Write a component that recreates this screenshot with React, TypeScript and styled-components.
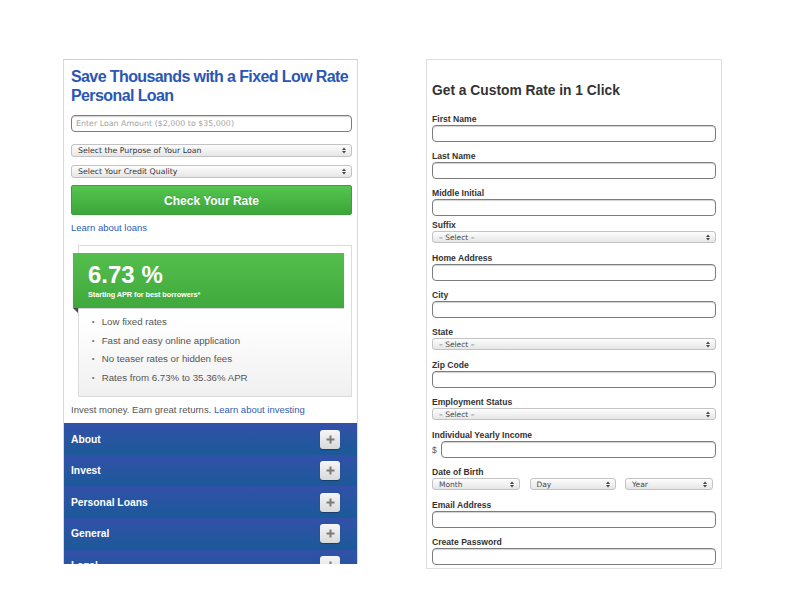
import React from 'react'
import styled, { createGlobalStyle } from 'styled-components'

const GlobalStyle = createGlobalStyle`
  body {
    margin: 0;
    background: #ffffff;
    font-family: "Liberation Sans", Arial, sans-serif;
  }
`

const Page = styled.div`
  display: flex;
  align-items: flex-start;
  gap: 68px;
  padding: 59px 0 0 63px;
`

/* ---------- left: loan teaser ---------- */

const LoanPanel = styled.section`
  width: 295px;
  height: 505px;
  box-sizing: border-box;
  border: 1px solid #d6d9e0;
  border-top-color: #c9d1e6;
  border-bottom: none;
  overflow: hidden;
`

const LoanBody = styled.div`
  padding: 7px 5px 0 7px;
`

const Headline = styled.h1`
  margin: 0;
  font-size: 16px;
  line-height: 19px;
  letter-spacing: -0.6px;
  font-weight: bold;
  color: #2b56b4;
`

const TextInput = styled.input<{ $mt?: number }>`
  display: block;
  width: 100%;
  height: 17px;
  margin: ${p => p.$mt ?? 0}px 0 0;
  padding: 0 4px;
  box-sizing: border-box;
  border: 1px solid #7d7d7d;
  border-radius: 4px;
  box-shadow: inset 0 1px 1px rgba(0, 0, 0, 0.18);
  background: #fff;
  font-family: "DejaVu Sans", sans-serif;
  font-size: 7.9px;
  color: #333;
  outline: none;

  &::placeholder {
    color: #a3a3a3;
  }
`

const SelectBox = styled.div<{ $mt?: number; $h?: number }>`
  display: flex;
  align-items: center;
  justify-content: space-between;
  height: ${p => p.$h ?? 13}px;
  margin-top: ${p => p.$mt ?? 0}px;
  padding: 0 5px 0 6px;
  box-sizing: border-box;
  border: 1px solid #c3c3c3;
  border-radius: 3px;
  background: linear-gradient(#fdfdfd, #e6e6e6);
  font-family: "DejaVu Sans", sans-serif;
  font-size: 7.8px;
  color: #333;
  white-space: nowrap;
`

const SelectText = styled.span<{ $muted?: boolean }>`
  color: ${p => (p.$muted ? '#4a4a4a' : '#333')};
  font-size: ${p => (p.$muted ? '7.5px' : '7.8px')};
`

const CheckButton = styled.button`
  display: block;
  width: 100%;
  height: 30px;
  margin-top: 7px;
  padding-top: 2px;
  border: 1px solid #3d9f3a;
  border-radius: 2px;
  background: linear-gradient(#55c44f, #3ba63a);
  color: #fff;
  font-family: "Liberation Sans", Arial, sans-serif;
  font-weight: bold;
  font-size: 12px;
  text-shadow: 0 -1px 0 rgba(0, 0, 0, 0.15);
`

const TextLink = styled.a`
  color: #2f5db3;
  text-decoration: none;
`

const LearnLine = styled.div`
  margin-top: 7.4px;
  font-size: 9.5px;
  line-height: 12px;
`

const RateCard = styled.div`
  margin: 10.5px 0 0 7px;
  padding: 7px 0 8px;
  border: 1px solid #dcdcdc;
  background: linear-gradient(#ffffff 50%, #f0f0f0);
`

const Ribbon = styled.div`
  position: relative;
  height: 55px;
  box-sizing: border-box;
  margin: 0 7px 0 -6px;
  padding: 9.4px 0 0 15px;
  background: linear-gradient(#54be4c, #40a93d);
  box-shadow: 0 1px 1px rgba(0, 0, 0, 0.15);
  color: #fff;

  &::after {
    content: '';
    position: absolute;
    left: 0;
    bottom: -5px;
    border-top: 5px solid #4a4a4a;
    border-left: 5px solid transparent;
  }
`

const BigRate = styled.div`
  font-size: 24px;
  line-height: 26px;
  font-weight: bold;
`

const RateNote = styled.div`
  margin-top: 2px;
  font-size: 7.4px;
  line-height: 10px;
  font-weight: bold;
  letter-spacing: -0.1px;
`

const Perks = styled.ul`
  list-style: none;
  margin: 0;
  padding: 5px 0 0 12.7px;
`

const Perk = styled.li`
  display: flex;
  font-size: 9.7px;
  line-height: 18.7px;
  color: #555;

  &::before {
    content: '•';
    width: 10px;
    font-size: 8px;
    color: #777;
  }
`

const InvestLine = styled.div`
  margin-top: 6.5px;
  font-size: 9.5px;
  line-height: 14px;
  color: #555;
`

const Nav = styled.nav`
  margin-top: 6px;
`

const NavRow = styled.div`
  display: flex;
  align-items: center;
  justify-content: space-between;
  height: 31.6px;
  padding: 0 17px 0 7px;
  background: linear-gradient(#3350a9, #1b5a98);
  color: #fff;
  font-size: 10.3px;
  font-weight: bold;
`

const PlusButton = styled.span`
  display: flex;
  align-items: center;
  justify-content: center;
  width: 20px;
  height: 19px;
  border-radius: 3px;
  background: linear-gradient(#f6f6f6, #d9d9d9);
  box-shadow: 0 1px 1px rgba(0, 0, 0, 0.3);
`

/* ---------- right: rate form ---------- */

const RatePanel = styled.section`
  width: 296px;
  box-sizing: border-box;
  padding: 23px 5px 3px;
  border: 1px solid #dedede;
`

const FormTitle = styled.h2`
  margin: 0 0 14px;
  font-size: 13.8px;
  line-height: 16px;
  font-weight: bold;
  color: #333;
`

const Field = styled.div<{ $gap: number }>`
  margin-bottom: ${p => p.$gap}px;
`

const Label = styled.label`
  display: block;
  font-size: 8.6px;
  line-height: 12px;
  font-weight: bold;
  color: #333;
`

const MoneyRow = styled.div`
  display: flex;
  align-items: center;
  gap: 3px;
`

const Dollar = styled.span`
  width: 6px;
  font-size: 8.5px;
  color: #555;
`

const DateRow = styled.div`
  display: grid;
  grid-template-columns: 88px 86px 88px;
  column-gap: 9.5px;
`

function Arrows() {
  return (
    <svg width="4" height="7" viewBox="0 0 4 7">
      <polygon points="0,3 2,0.5 4,3" fill="#444" />
      <polygon points="0,4 2,6.5 4,4" fill="#444" />
    </svg>
  )
}

function Plus() {
  return (
    <svg width="9" height="9" viewBox="0 0 9 9">
      <path d="M4.5 0.5v8M0.5 4.5h8" stroke="#7b7b7b" strokeWidth="2" />
    </svg>
  )
}

type FakeSelectProps = { text: string; muted?: boolean; mt?: number; h?: number }

function FakeSelect({ text, muted, mt, h }: FakeSelectProps) {
  return (
    <SelectBox $mt={mt} $h={h}>
      <SelectText $muted={muted}>{text}</SelectText>
      <Arrows />
    </SelectBox>
  )
}

const perks = [
  'Low fixed rates',
  'Fast and easy online application',
  'No teaser rates or hidden fees',
  'Rates from 6.73% to 35.36% APR',
]

const navItems = ['About', 'Invest', 'Personal Loans', 'General', 'Legal']

type FieldDef = { label: string; kind: 'input' | 'select'; gap?: number }

const topFields: FieldDef[] = [
  { label: 'First Name', kind: 'input' },
  { label: 'Last Name', kind: 'input' },
  { label: 'Middle Initial', kind: 'input', gap: 3 },
  { label: 'Suffix', kind: 'select' },
  { label: 'Home Address', kind: 'input' },
  { label: 'City', kind: 'input' },
  { label: 'State', kind: 'select' },
  { label: 'Zip Code', kind: 'input' },
  { label: 'Employment Status', kind: 'select' },
]

function App() {
  return (
    <>
      <GlobalStyle />
      <Page>
        <LoanPanel>
          <LoanBody>
            <Headline>Save Thousands with a Fixed Low Rate Personal Loan</Headline>
            <TextInput $mt={10} placeholder="Enter Loan Amount ($2,000 to $35,000)" />
            <FakeSelect mt={12} text="Select the Purpose of Your Loan" />
            <FakeSelect mt={8} text="Select Your Credit Quality" />
            <CheckButton>Check Your Rate</CheckButton>
            <LearnLine>
              <TextLink href="#">Learn about loans</TextLink>
            </LearnLine>
            <RateCard>
              <Ribbon>
                <BigRate>6.73 %</BigRate>
                <RateNote>Starting APR for best borrowers*</RateNote>
              </Ribbon>
              <Perks>
                {perks.map(p => (
                  <Perk key={p}>{p}</Perk>
                ))}
              </Perks>
            </RateCard>
            <InvestLine>
              Invest money. Earn great returns. <TextLink href="#">Learn about investing</TextLink>
            </InvestLine>
          </LoanBody>
          <Nav>
            {navItems.map(item => (
              <NavRow key={item}>
                <span>{item}</span>
                <PlusButton>
                  <Plus />
                </PlusButton>
              </NavRow>
            ))}
          </Nav>
        </LoanPanel>

        <RatePanel>
          <FormTitle>Get a Custom Rate in 1 Click</FormTitle>
          {topFields.map(f => (
            <Field key={f.label} $gap={f.gap ?? (f.kind === 'input' ? 8 : 9)}>
              <Label>{f.label}</Label>
              {f.kind === 'input' ? <TextInput /> : <FakeSelect h={12} muted text="– Select –" />}
            </Field>
          ))}
          <Field $gap={8}>
            <Label>Individual Yearly Income</Label>
            <MoneyRow>
              <Dollar>$</Dollar>
              <TextInput />
            </MoneyRow>
          </Field>
          <Field $gap={9}>
            <Label>Date of Birth</Label>
            <DateRow>
              <FakeSelect h={12} muted text="Month" />
              <FakeSelect h={12} muted text="Day" />
              <FakeSelect h={12} muted text="Year" />
            </DateRow>
          </Field>
          <Field $gap={8}>
            <Label>Email Address</Label>
            <TextInput />
          </Field>
          <Field $gap={0}>
            <Label>Create Password</Label>
            <TextInput type="password" />
          </Field>
        </RatePanel>
      </Page>
    </>
  )
}

export default App
